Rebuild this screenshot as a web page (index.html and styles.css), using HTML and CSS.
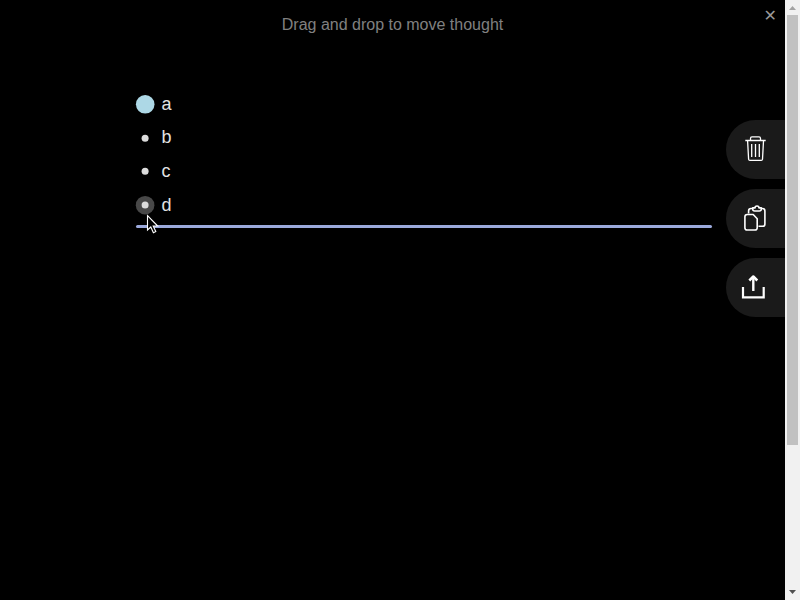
FILE: index.html
```
<!DOCTYPE html>
<html lang="en">
<head>
<meta charset="utf-8">
<title>Thoughts</title>
<link rel="stylesheet" href="styles.css">
</head>
<body>
<main class="content">
  <header class="alert">Drag and drop to move thought</header>
  <span class="close">✕</span>
  <section class="outline">
    <ul class="thoughts">
      <li class="thought"><svg class="bullet"><circle class="cursor" cx="9.2" cy="17.3" r="9.3"/></svg>a</li>
      <li class="thought"><svg class="bullet"><circle class="dot" cx="9.1" cy="18.2" r="3.5"/></svg>b</li>
      <li class="thought"><svg class="bullet"><circle class="dot" cx="9.1" cy="17.2" r="3.5"/></svg>c</li>
      <li class="thought"><svg class="bullet"><circle class="dragging" cx="9.1" cy="17.2" r="9.3"/><circle class="dot" cx="9.1" cy="17.1" r="3.5"/></svg>d</li>
    </ul>
    <div class="drop-line"></div>
  </section>
  <nav class="quick-drop">
    <div class="drop-button">
      <svg width="59" height="59" viewBox="0 0 59 59" fill="none" stroke="#fff">
        <path d="M24.5 20V18.4Q24.5 16.9 26 16.9H33Q34.5 16.9 34.5 18.4V20M19.3 20.5H39.7M21.6 21L22.6 39.2Q22.7 40.4 23.9 40.4H35.2Q36.4 40.4 36.5 39.2L37.5 21" stroke-width="1.3"/>
        <path d="M25.7 24V37M29.5 24V37M33.3 24V37" stroke-width="1.3"/>
      </svg>
    </div>
    <div class="drop-button">
      <svg width="59" height="59" viewBox="0 0 59 59" fill="none" stroke="#fff" stroke-width="1.6" stroke-linejoin="round">
        <path d="M22.6 24.5V22Q22.6 19.5 25 19.5H26.5M35.5 19.5H36.5Q38.9 19.5 38.9 22V34.9Q38.9 37.3 36.5 37.3H32.5"/>
        <path d="M26.7 18.9H29Q29 17 31 17Q33 17 33 18.9H35.3V20Q35.3 22 33.3 22H28.7Q26.7 22 26.7 20Z"/>
        <path d="M21.2 25.5H27.2L31.2 29.7V38.7Q31.2 41 28.9 41H21.2Q18.9 41 18.9 38.7V27.8Q18.9 25.5 21.2 25.5Z"/>
      </svg>
    </div>
    <div class="drop-button">
      <svg width="59" height="59" viewBox="0 0 59 59" fill="none" stroke="#fff" stroke-width="2.2">
        <path d="M17 29V39.3H37.7V29" />
        <path d="M27.3 33V19" stroke-width="2.4"/>
        <path d="M23.3 22.5L27.3 18.5L31.3 22.5" stroke-width="2.5" stroke-linejoin="round"/>
      </svg>
    </div>
  </nav>
  <svg class="pointer" width="14" height="21" viewBox="0 0 14 21">
    <path d="M1.5 1.5V16L4.8 13L7.4 18.7L9.8 17.6L7.2 12H11.7Z" fill="#000" stroke="#fff" stroke-width="1.1"/>
  </svg>
</main>
<aside class="scrollbar">
  <svg width="15" height="15"><path d="M4 10H11L7.5 6Z" fill="#a3a3a3"/></svg>
  <div class="thumb"></div>
  <svg class="down" width="15" height="15"><path d="M4 5H11L7.5 9Z" fill="#505050"/></svg>
</aside>
</body>
</html>
```
FILE: styles.css
```
body {
  margin: 0;
  height: 600px;
  display: flex;
  overflow: hidden;
  background: #000;
  color: #e3e3e3;
  font-family: "Liberation Sans", Arial, sans-serif;
}

.content {
  position: relative;
  width: 785px;
}

.alert {
  padding-top: 16px;
  height: 71px;
  line-height: 18px;
  font-size: 16px;
  text-align: center;
  color: #808080;
}

.close {
  position: absolute;
  top: 6px;
  right: 8px;
  font: 16px/20px "DejaVu Sans", sans-serif;
  color: #999;
}

.outline {
  padding: 0 73px 0 136px;
}

.thoughts {
  margin: 0;
  padding: 0;
  list-style: none;
}

.thought {
  display: flex;
  height: 34px;
  line-height: 34px;
  font-size: 18px;
}

.thought:first-child {
  margin-bottom: -1px;
}

.bullet {
  width: 25.5px;
  height: 34px;
  overflow: visible;
}

.cursor {
  fill: #add8e6;
}

.dragging {
  fill: #484848;
}

.dot {
  fill: #dcdcdc;
}

.drop-line {
  height: 3px;
  border-radius: 2px;
  background: #9ba9dc;
  margin-top: 3px;
}

.quick-drop {
  position: absolute;
  top: 120px;
  right: 0;
  display: grid;
  gap: 10px;
}

.drop-button {
  width: 59px;
  height: 59px;
  border-radius: 30px 0 0 30px;
  background: #1a1a1a;
}

.drop-button svg {
  display: block;
}

.pointer {
  position: absolute;
  left: 146px;
  top: 214px;
}

.scrollbar {
  display: flex;
  flex-direction: column;
  align-items: center;
  width: 15px;
  background: #f1f1f1;
}

.thumb {
  width: 11px;
  height: 430px;
  background: #c1c1c1;
}

.down {
  margin-top: auto;
}
```
